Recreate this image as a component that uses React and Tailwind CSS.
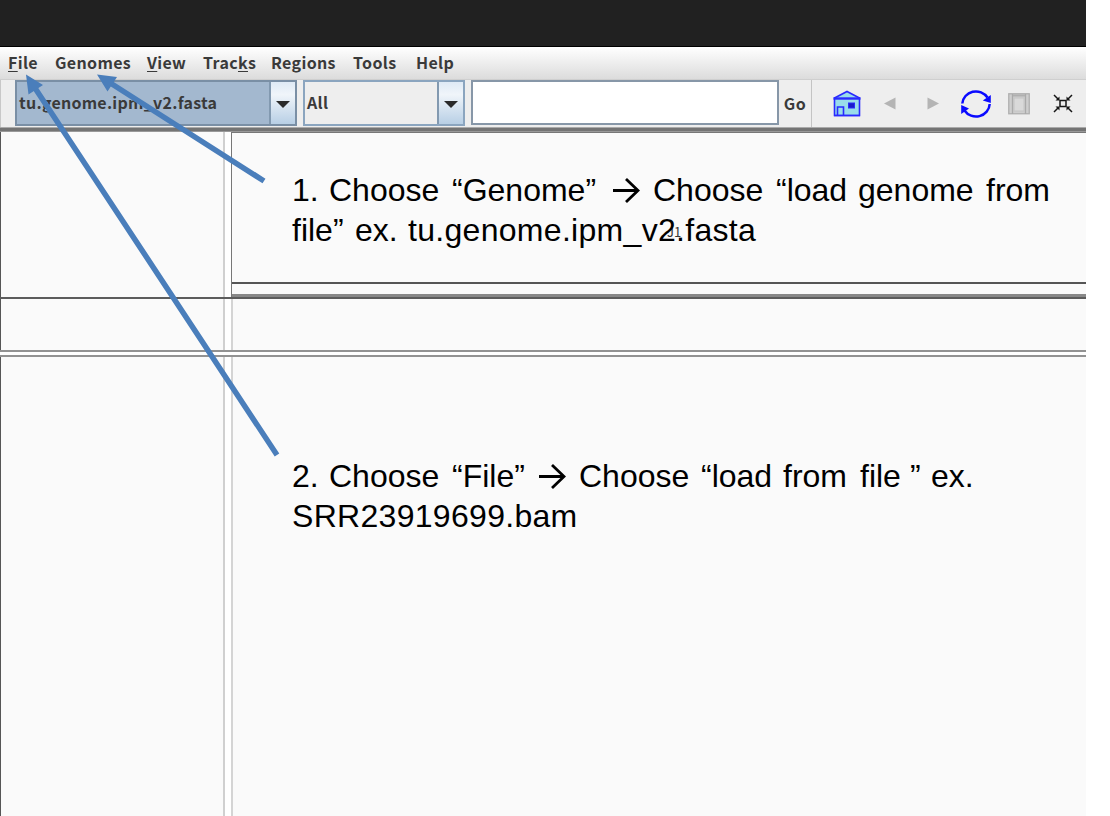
import React from "react";

const menus = [
  { x: "w-[47px]", parts: ["", "F", "ile"] },
  { x: "w-[92px]", parts: ["Genomes", "", ""] },
  { x: "w-[56px]", parts: ["", "V", "iew"] },
  { x: "w-[68px]", parts: ["Trac", "k", "s"] },
  { x: "w-[82px]", parts: ["Regions", "", ""] },
  { x: "w-[63px]", parts: ["Tools", "", ""] },
  { x: "w-[50px]", parts: ["Help", "", ""] },
];

function MenuBar() {
  return (
    <nav className="flex h-[33px] shrink-0 items-center border-b border-[#cfcfcf] bg-linear-to-b from-white to-[#dcdcdc] pb-px pl-2 text-[16px] leading-[31px] tracking-[0.35px]">
      {menus.map((m) => (
        <span key={m.parts.join("")} className={`${m.x} shrink-0 whitespace-nowrap`}>
          {m.parts[0]}
          <span className="underline decoration-1 underline-offset-2">{m.parts[1]}</span>
          {m.parts[2]}
        </span>
      ))}
    </nav>
  );
}

function DropButton() {
  return (
    <span className="flex w-[26px] shrink-0 items-center justify-center border-l-2 border-[#8299b0] bg-linear-to-b from-[#dfeaf5] via-[#f0f5fa] via-30% to-[#b8cfe5] pt-0.5">
      <svg width="14" height="7" viewBox="0 0 14 7">
        <path d="M0 0H14L7 7Z" fill="#2a2a2a" />
      </svg>
    </span>
  );
}

function ToolIcons() {
  return (
    <div className="flex items-center">
      <svg className="ml-[21px]" width="28" height="27" viewBox="0 0 28 27">
        <path d="M1.500 8L14 1.500L26.500 8V25.500H1.500Z" fill="#99dcea" stroke="#2a2aff" strokeWidth="1.600" />
        <path d="M0.500 8.500H27.500" stroke="#2a2aff" strokeWidth="2.400" />
        <path d="M4.500 25V17H10.500V25M1 25.500H27" fill="none" stroke="#2a2aff" strokeWidth="1.600" />
        <rect x="15.500" y="13" width="6" height="5" fill="#1a1ac8" stroke="#2a2aff" />
      </svg>
      <svg className="ml-[23px]" width="12" height="13" viewBox="0 0 12 13">
        <path d="M0 6.500L11.500 0.500V12.500Z" fill="#b4b4b4" />
      </svg>
      <svg className="ml-[31px]" width="12" height="13" viewBox="0 0 12 13">
        <path d="M12 6.500L0.500 0.500V12.500Z" fill="#b4b4b4" />
      </svg>
      <svg className="ml-[21px]" width="32" height="30" viewBox="0 0 32 30">
        <path d="M2.300 14.500A13.700 13.200 0 0 1 27.500 8.500" fill="none" stroke="#0a0aff" strokeWidth="2.500" />
        <path d="M29.700 15A13.700 13.200 0 0 1 4.500 21.500" fill="none" stroke="#0a0aff" strokeWidth="2.500" />
        <path d="M30.800 6V14L22.800 11.500ZM1.200 25V16L9 19.500Z" fill="#0a0aff" />
      </svg>
      <svg className="ml-4" width="22" height="22" viewBox="0 0 22 22">
        <rect x="0.750" y="0.750" width="20.500" height="20" fill="#cecece" stroke="#b0b0b0" strokeWidth="1.300" />
        <path d="M4.500 1V21M17.500 1V21" stroke="#aaa" strokeWidth="1.300" />
        <rect x="6" y="5" width="10" height="13" fill="#d9d9d9" stroke="#c4c4c4" />
        <path d="M5 2.500H17" stroke="#b0b0b0" strokeWidth="2" />
      </svg>
      <svg className="ml-[23px]" width="20" height="19" viewBox="0 0 20 19" fill="none" stroke="#151515" strokeWidth="1.500">
        <rect x="7" y="6.500" width="6" height="6" />
        <path d="M1 1L5 5M19 1L15 5M1 18L5 14M19 18L15 14" />
        <path fill="#151515" stroke="none" d="M2.500 6.500H6.500V2.500ZM17.500 6.500H13.500V2.500ZM2.500 12.500H6.500V16.500ZM17.500 12.500H13.500V16.500Z" />
      </svg>
    </div>
  );
}

function Toolbar() {
  return (
    <div className="flex h-[47px] shrink-0 border-l border-[#c8c8c8] bg-[#eee] pl-[14px] text-[16px]">
      <div className="flex h-[46px] w-[282px] shrink-0 border-2 border-[#7a8fa5] bg-[#a3b8cf]">
        <span className="min-w-0 grow pl-0.5 leading-[41px] tracking-[0.25px]">tu.genome.ipm_v2.fasta</span>
        <DropButton />
      </div>
      <div className="ml-1.5 flex h-[46px] w-[162px] shrink-0 border-2 border-[#8ba5bf]">
        <span className="grow pl-0.5 leading-[41px] tracking-[0.3px]">All</span>
        <DropButton />
      </div>
      <div className="ml-1.5 h-[45px] w-[308px] shrink-0 border-2 border-[#8797a8] bg-white" />
      <div className="flex w-[33px] shrink-0 items-center justify-center border-r border-[#c4c4c4] pb-0.5 tracking-[0.4px]">Go</div>
      <ToolIcons />
    </div>
  );
}

function Arrow() {
  return (
    <span className="inline-flex w-[40px] shrink-0">
      <svg className="mt-[8px]" width="27" height="25" viewBox="0 0 27 25" fill="none" stroke="black" strokeWidth="2.800">
        <path d="M0 12.500H25M13 1L25 12.500L13 24" />
      </svg>
    </span>
  );
}

function Notes() {
  return (
    <div className="absolute top-[170px] left-[292px] text-[32px] leading-[40px] whitespace-nowrap text-black [font-family:'Liberation_Sans',Arial,sans-serif]">
      <div className="flex">
        <span className="w-[37px]">1.</span>
        <span className="w-[123px]">Choose</span>
        <span className="w-[161px]">“Genome”</span>
        <Arrow />
        <span className="w-[123px]">Choose</span>
        <span className="w-[82px]">“load</span>
        <span className="w-[128px]">genome</span>
        <span>from</span>
      </div>
      <div className="flex">
        <span className="w-[63px]">file”</span>
        <span className="w-[53px]">ex.</span>
        <span className="tracking-[0.3px]">tu.genome.ipm_v2.fasta</span>
      </div>
      <div className="mt-[206px] flex">
        <span className="w-[37px]">2.</span>
        <span className="w-[123px]">Choose</span>
        <span className="w-[87px]">“File”</span>
        <Arrow />
        <span className="w-[122px]">Choose</span>
        <span className="w-[82px]">“load</span>
        <span className="w-[77px]">from</span>
        <span className="w-[50px]">file</span>
        <span className="w-[21px]">”</span>
        <span>ex.</span>
      </div>
      <div className="tracking-[0.3px]">SRR23919699.bam</div>
    </div>
  );
}

function Pointers() {
  return (
    <svg className="absolute top-0 left-0" width="300" height="470" viewBox="0 0 300 470" stroke="#4a7ebb" strokeWidth="5.500" fill="#4a7ebb">
      <path d="M264 181L108 81.500M277 455L33 85" />
      <path stroke="none" d="M97 74.500L117 77L107.500 91.500ZM26 74.500L43 85L28.500 94.500Z" />
    </svg>
  );
}

export default function App() {
  return (
    <div className="relative h-[816px] w-[1110px] overflow-hidden bg-white [font-family:'Noto_Sans_CJK_SC',sans-serif]">
      <div className="flex h-full w-[1086px] flex-col font-bold text-[#3a3a3a]">
        <header className="h-[47px] shrink-0 border-b border-black bg-[#212121]" />
        <MenuBar />
        <Toolbar />
        <div className="h-[5px] shrink-0 border-t border-b border-t-[#aaa] border-b-[#999] bg-[#747474]" />
        <section className="flex h-[165px] shrink-0">
          <div className="w-[225px] border-r-2 border-l border-r-[#d0d0d0] border-l-[#555] bg-[#fafafa]" />
          <div className="ml-1.5 flex grow flex-col border-t border-l border-[#777] bg-[#fafafa]">
            <div className="h-[151px] border-b-2 border-[#555]" />
            <div className="mt-auto h-[3px] bg-[#888]" />
          </div>
        </section>
        <div className="h-0.5 shrink-0 bg-[#5c5c5c]" />
        <section className="flex h-[51px] shrink-0">
          <div className="w-[225px] border-r-2 border-l border-r-[#d0d0d0] border-l-[#555] bg-[#fafafa]" />
          <div className="ml-1.5 grow border-l-2 border-[#d4d4d4] bg-[#fafafa]" />
        </section>
        <div className="h-[7px] shrink-0 border-t-2 border-b-2 border-[#929292] bg-white" />
        <section className="flex grow">
          <div className="w-[225px] border-r-2 border-l border-r-[#d0d0d0] border-l-[#555] bg-[#fafafa]" />
          <div className="ml-1.5 grow border-l-2 border-[#d4d4d4] bg-[#fafafa]" />
        </section>
      </div>
      <span className="absolute top-[223px] left-[667px] text-[13px] leading-[17px] text-[#333]">J1</span>
      <Notes />
      <Pointers />
    </div>
  );
}
